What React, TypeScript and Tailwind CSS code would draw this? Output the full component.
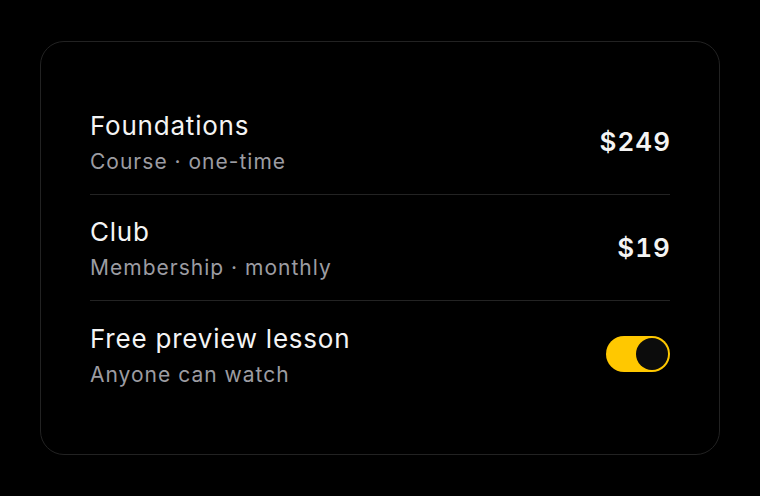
import { useState } from "react";

type Item = {
  title: string;
  meta: string;
  price?: string;
};

const items: Item[] = [
  { title: "Foundations", meta: "Course · one-time", price: "$249" },
  { title: "Club", meta: "Membership · monthly", price: "$19" },
  { title: "Free preview lesson", meta: "Anyone can watch" },
];

function Toggle({ on, onChange }: { on: boolean; onChange: (v: boolean) => void }) {
  return (
    <button
      type="button"
      role="switch"
      aria-checked={on}
      onClick={() => onChange(!on)}
      className={`flex h-9 w-16 items-center rounded-full p-0.5 transition-colors ${
        on ? "justify-end bg-[#ffc800]" : "justify-start bg-[#2a2a2a]"
      }`}
    >
      <span className="block h-8 w-8 rounded-full bg-[#0c0c0c]" />
    </button>
  );
}

export default function App() {
  const [preview, setPreview] = useState(true);

  return (
    <div
      className="flex h-[496px] w-[760px] items-center justify-center bg-black"
      style={{ fontFamily: "Inter, 'Liberation Sans', sans-serif" }}
    >
      <div className="w-[680px] rounded-3xl border border-[#222222] bg-black px-[49px] py-[47px]">
        {items.map((item, i) => (
          <div
            key={item.title}
            className={`flex h-[106px] items-center justify-between ${
              i < items.length - 1 ? "border-b border-[#232323]" : ""
            }`}
          >
            <div className="flex flex-col pt-[3px]">
              <span className="text-[26px] leading-8 tracking-[0.03em] text-[#f4f4f4]">
                {item.title}
              </span>
              <span className="mt-1.5 text-[21px] leading-7 tracking-[0.048em] text-[#9c9ca2]">
                {item.meta}
              </span>
            </div>
            {item.price ? (
              <span className="-mr-px text-[26px] font-semibold tabular-nums tracking-[0.04em] text-[#f4f4f4]">
                {item.price}
              </span>
            ) : (
              <Toggle on={preview} onChange={setPreview} />
            )}
          </div>
        ))}
      </div>
    </div>
  );
}
